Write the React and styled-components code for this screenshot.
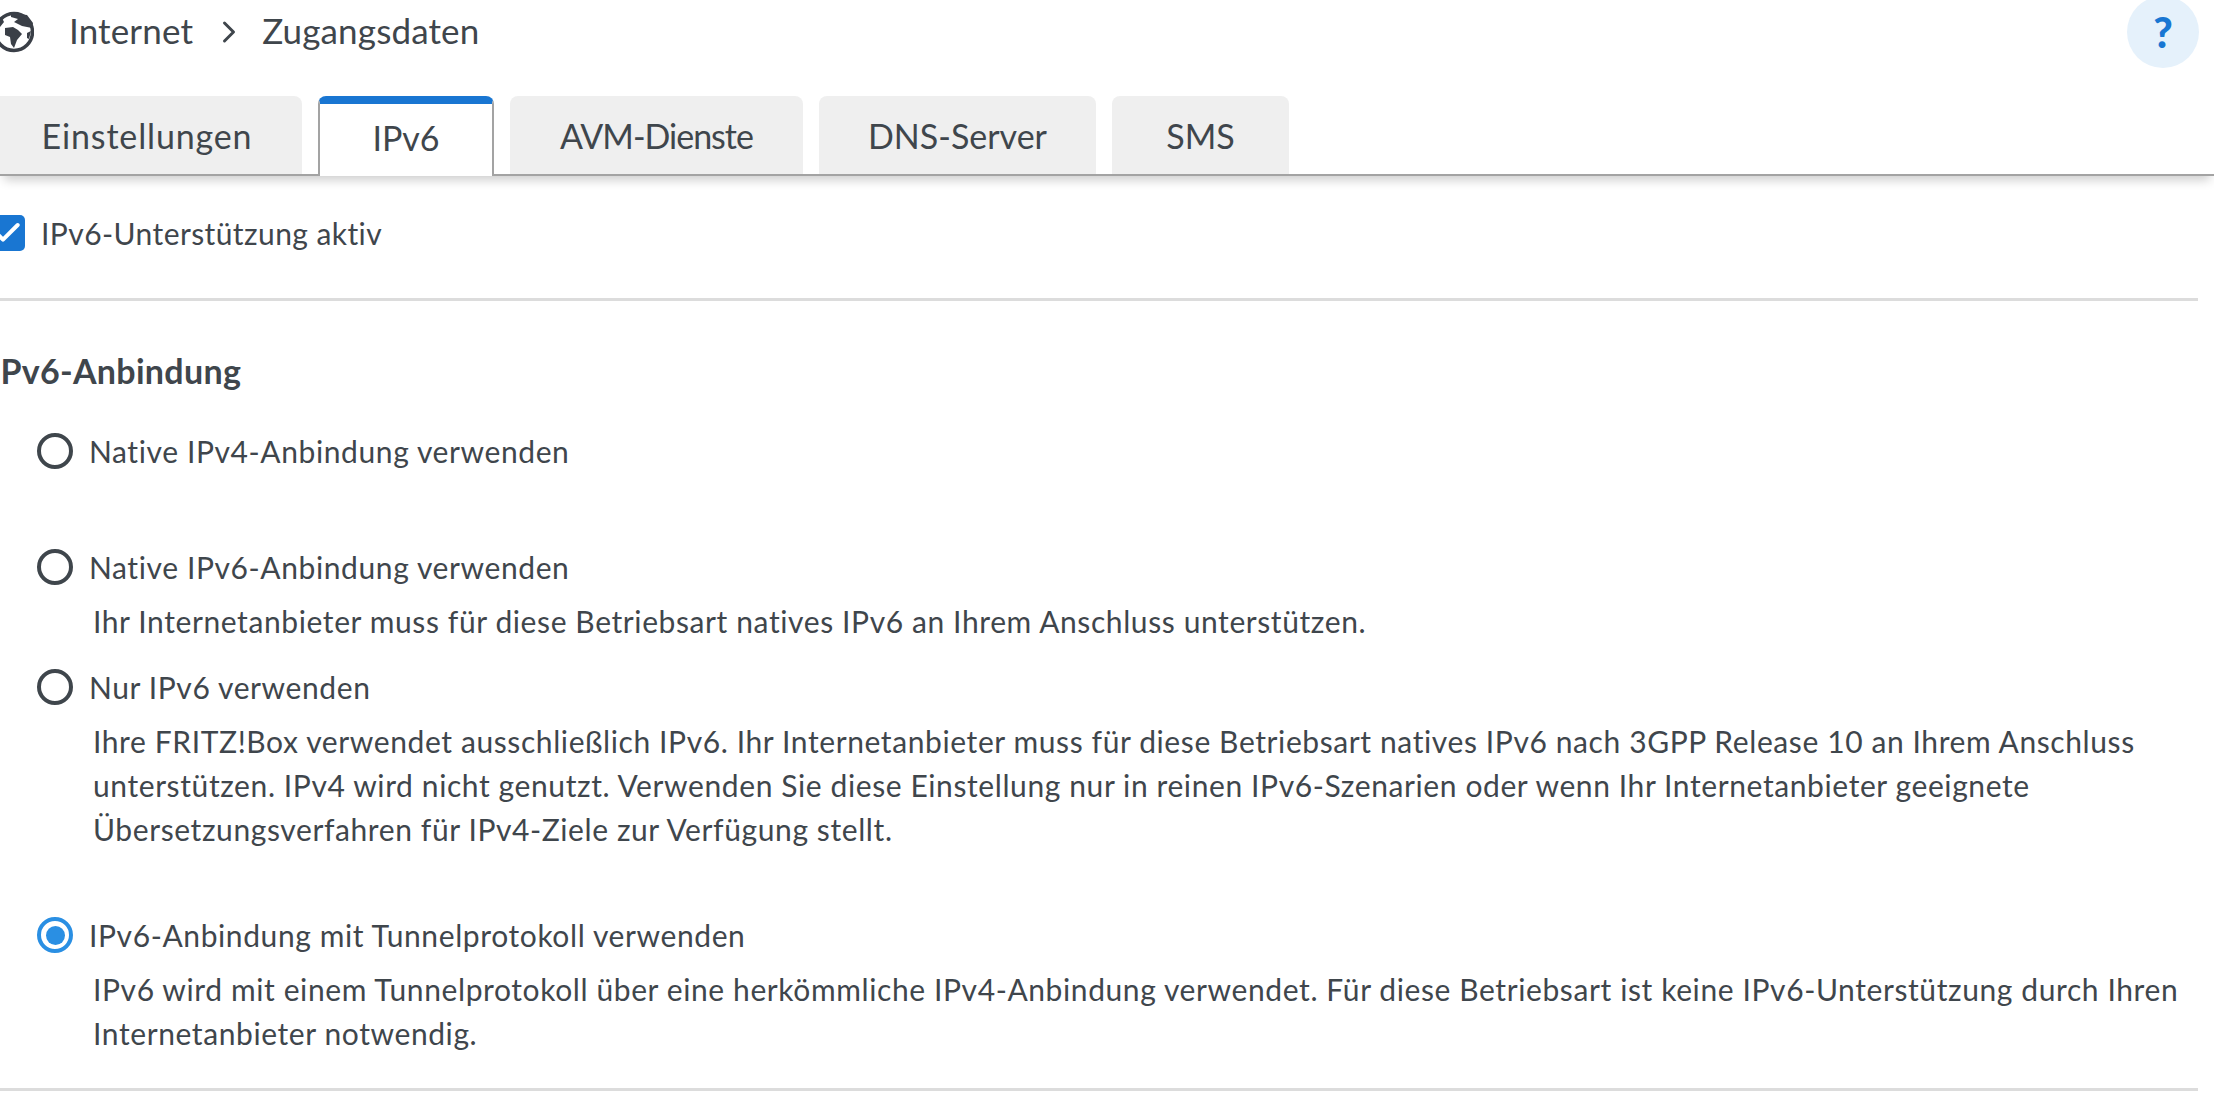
import React from 'react';
import styled, { createGlobalStyle } from 'styled-components';
import { ChevronRight, Check } from 'lucide-react';

const GlobalStyle = createGlobalStyle`
  html, body {
    margin: 0;
    height: 100%;
    background: #fff;
    overflow: hidden;
  }
  body {
    font-family: "Lato", "Noto Sans", sans-serif;
    color: #3f464c;
  }
`;

const Page = styled.div`
  width: 2214px;
  height: 1116px;
  overflow: hidden;
`;

const Header = styled.header`
  display: flex;
  align-items: center;
  height: 64px;
  padding-right: 15px;
`;

const Crumbs = styled.div`
  display: flex;
  align-items: center;
  flex: 1;
  font-size: 35px;
  letter-spacing: 0.15px;
`;

const CrumbText = styled.span`
  margin-bottom: 5px;
`;

const GlobeIcon = styled.svg`
  width: 40px;
  height: 44px;
  margin-left: -6px;
  margin-right: 35px;
`;

const CrumbArrow = styled(ChevronRight)`
  margin: 0 15px 0 18px;
`;

const HelpButton = styled.div`
  flex: none;
  width: 72px;
  height: 72px;
  border-radius: 50%;
  background: #e5f1fb;
  color: #1976d2;
  font-size: 42px;
  font-weight: 900;
  display: flex;
  align-items: center;
  justify-content: center;
`;

const TabBar = styled.nav`
  display: flex;
  align-items: flex-end;
  gap: 16px;
  height: 78px;
  margin-top: 32px;
  border-bottom: 2px solid #a3a3a3;
  box-shadow: 0 8px 10px -4px rgba(0, 0, 0, 0.2);
  clip-path: inset(0 0 -30px 0);
`;

const Tab = styled.div`
  box-sizing: border-box;
  flex: none;
  width: ${(p) => p.$width}px;
  height: ${(p) => (p.$active ? 80 : 78)}px;
  margin-left: ${(p) => p.$offset || 0}px;
  margin-bottom: ${(p) => (p.$active ? -2 : 0)}px;
  padding-bottom: ${(p) => (p.$active ? 6 : 0)}px;
  display: flex;
  align-items: center;
  justify-content: center;
  border-radius: 8px 8px 0 0;
  font-size: 34px;
  letter-spacing: ${(p) => p.$spacing || 0}px;
  background: ${(p) => (p.$active ? '#fff' : '#efefef')};
  border-left: ${(p) => (p.$active ? '2px solid #a3a3a3' : 'none')};
  border-right: ${(p) => (p.$active ? '2px solid #a3a3a3' : 'none')};
  border-top: ${(p) => (p.$active ? '8px solid #1976d2' : 'none')};
`;

const CheckRow = styled.div`
  display: flex;
  align-items: center;
  gap: 16px;
  height: 114px;
  padding-bottom: 8px;
  font-size: 30px;
  letter-spacing: 0.42px;
`;

const CheckBox = styled.span`
  flex: none;
  width: 36px;
  height: 36px;
  margin-left: -11px;
  border-radius: 5px;
  background: #1976d2;
  color: #fff;
  display: flex;
  align-items: center;
  justify-content: center;
`;

const Divider = styled.hr`
  width: 2198px;
  height: 3px;
  margin: 0;
  border: none;
  background: #dcdcdc;
`;

const Heading = styled.h2`
  margin: 47px 0 0 -10px;
  height: 46px;
  line-height: 46px;
  font-size: 34px;
  font-weight: 700;
  letter-spacing: 0.3px;
`;

const Options = styled.div`
  padding-left: 37px;
  padding-top: 34px;
  display: flex;
  flex-direction: column;
`;

const Option = styled.div`
  min-height: ${(p) => p.$height}px;
`;

const OptionLabel = styled.label`
  display: flex;
  align-items: center;
  gap: 16px;
  height: 46px;
  font-size: 30px;
  letter-spacing: 0.6px;
`;

const Radio = styled.span`
  box-sizing: border-box;
  flex: none;
  width: 36px;
  height: 36px;
  border-radius: 50%;
  border: 4px solid ${(p) => (p.$checked ? '#2a8fe3' : '#3f464c')};
  display: flex;
  align-items: center;
  justify-content: center;
  &::after {
    content: '';
    display: ${(p) => (p.$checked ? 'block' : 'none')};
    width: 19px;
    height: 19px;
    border-radius: 50%;
    background: #2a8fe3;
  }
`;

const Description = styled.p`
  margin: 9px 0 0 56px;
  font-size: 30px;
  line-height: 44px;
  letter-spacing: 0.6px;
  width: 2125px;
`;

const tabs = [
  { label: 'Einstellungen', width: 310, offset: -8, spacing: 0.85 },
  { label: 'IPv6', width: 176, active: true },
  { label: 'AVM-Dienste', width: 293, spacing: -1 },
  { label: 'DNS-Server', width: 277 },
  { label: 'SMS', width: 177 },
];

const options = [
  { label: 'Native IPv4-Anbindung verwenden', height: 116 },
  {
    label: 'Native IPv6-Anbindung verwenden',
    height: 120,
    text: 'Ihr Internetanbieter muss für diese Betriebsart natives IPv6 an Ihrem Anschluss unterstützen.',
  },
  {
    label: 'Nur IPv6 verwenden',
    height: 248,
    text: 'Ihre FRITZ!Box verwendet ausschließlich IPv6. Ihr Internetanbieter muss für diese Betriebsart natives IPv6 nach 3GPP Release 10 an Ihrem Anschluss unterstützen. IPv4 wird nicht genutzt. Verwenden Sie diese Einstellung nur in reinen IPv6-Szenarien oder wenn Ihr Internetanbieter geeignete Übersetzungsverfahren für IPv4-Ziele zur Verfügung stellt.',
  },
  {
    label: 'IPv6-Anbindung mit Tunnelprotokoll verwenden',
    height: 176,
    checked: true,
    text: 'IPv6 wird mit einem Tunnelprotokoll über eine herkömmliche IPv4-Anbindung verwendet. Für diese Betriebsart ist keine IPv6-Unterstützung durch Ihren Internetanbieter notwendig.',
  },
];

const Globe = () => (
  <GlobeIcon viewBox="0 0 40 44">
    <circle cx="20" cy="22" r="18.5" fill="#fff" stroke="#3a3f47" strokeWidth="3.5" />
    <path
      d="M17 3 L33 5 L39 13 L38 18 L28 16 L20 12 L24 9 L17 7 Z M11 18 L19 17 L24 20 L28 24 L23 30 L20 38 L17 34 L16 27 L11 25 Z M33 23 L37 21 L35 29 L33 28 Z M2 12 L8 8 L10 12 L6 17 L3 22 Z"
      fill="#3a3f47"
    />
  </GlobeIcon>
);

const App = () => {
  return (
    <Page>
      <GlobalStyle />
      <Header>
        <Crumbs>
          <Globe />
          <CrumbText>Internet</CrumbText>
          <CrumbArrow size={36} strokeWidth={2} />
          <CrumbText>Zugangsdaten</CrumbText>
        </Crumbs>
        <HelpButton>?</HelpButton>
      </Header>

      <TabBar>
        {tabs.map((tab) => (
          <Tab
            key={tab.label}
            $width={tab.width}
            $offset={tab.offset}
            $spacing={tab.spacing}
            $active={tab.active}
          >
            {tab.label}
          </Tab>
        ))}
      </TabBar>

      <CheckRow>
        <CheckBox>
          <Check size={32} strokeWidth={3} />
        </CheckBox>
        IPv6-Unterstützung aktiv
      </CheckRow>
      <Divider />

      <Heading>IPv6-Anbindung</Heading>
      <Options>
        {options.map((opt) => (
          <Option key={opt.label} $height={opt.height}>
            <OptionLabel>
              <Radio $checked={opt.checked} />
              {opt.label}
            </OptionLabel>
            {opt.text && <Description>{opt.text}</Description>}
          </Option>
        ))}
      </Options>
      <Divider />
    </Page>
  );
};

export default App;
